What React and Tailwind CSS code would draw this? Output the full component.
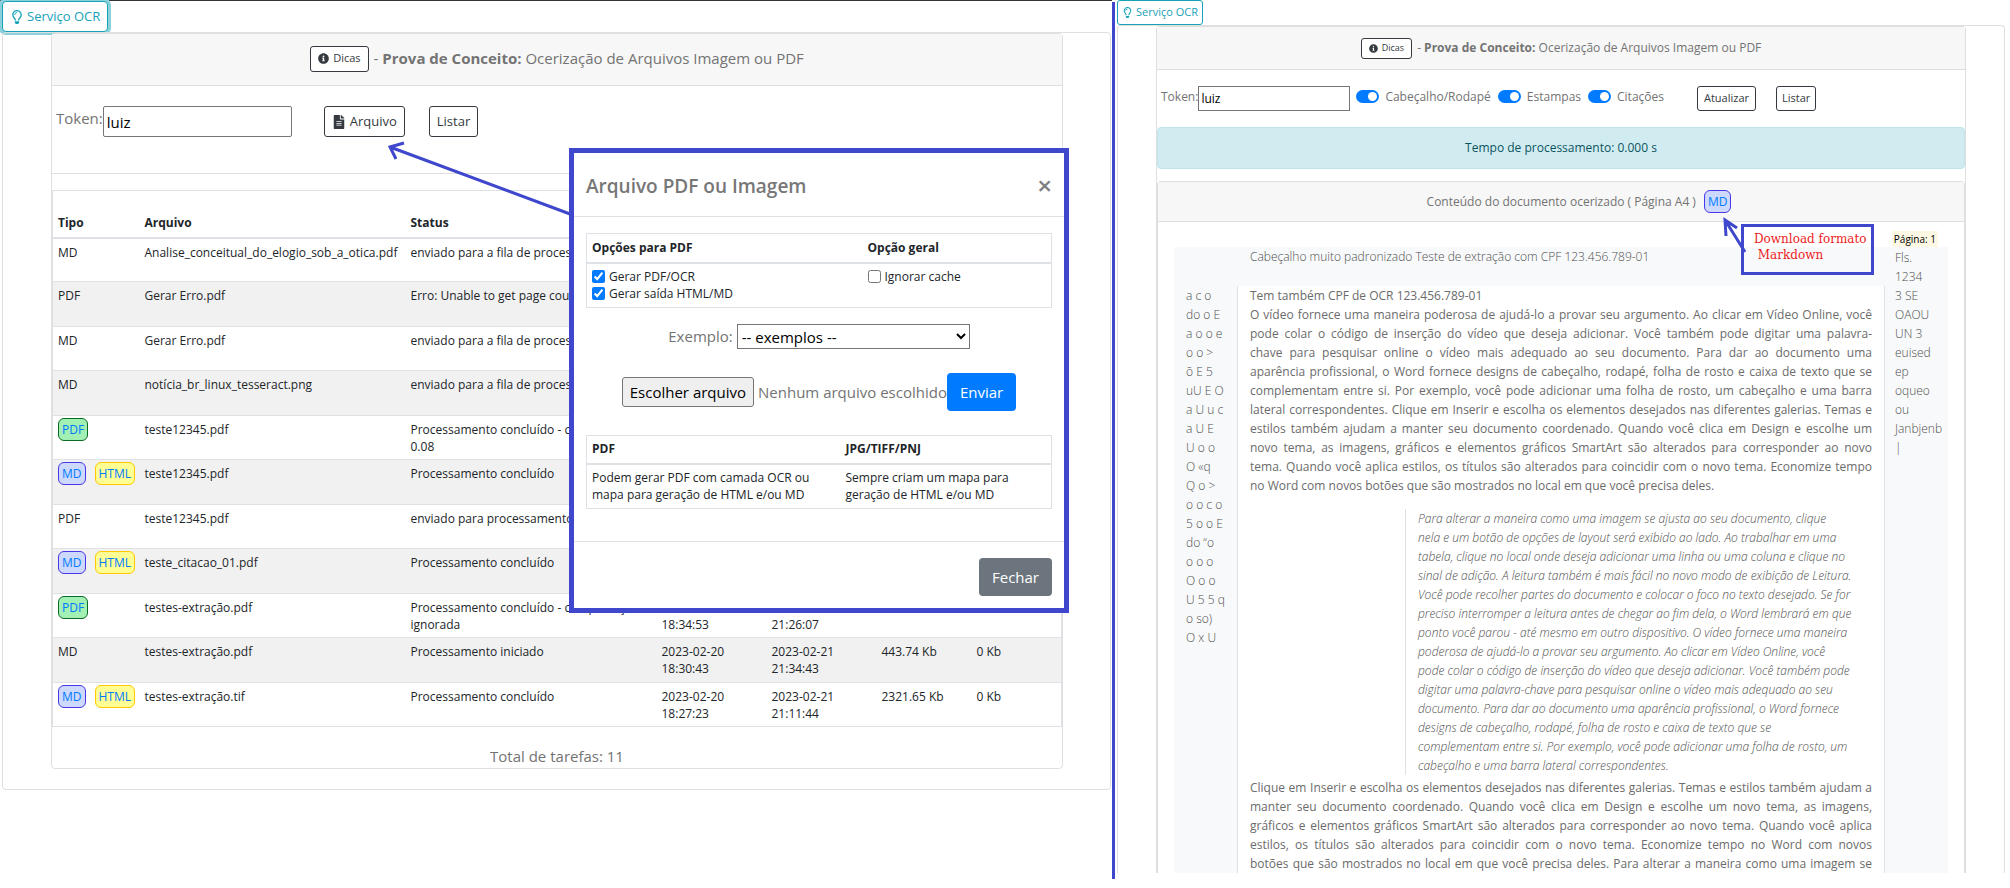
import { useState } from "react";
import { FaRegLightbulb, FaInfoCircle, FaFileAlt } from "react-icons/fa";

const tarefas = [
  { tipos: ["MD"], arquivo: "Analise_conceitual_do_elogio_sob_a_otica.pdf", status: "enviado para a fila de processamento" },
  { tipos: ["PDF"], arquivo: "Gerar Erro.pdf", status: "Erro: Unable to get page count." },
  { tipos: ["MD"], arquivo: "Gerar Erro.pdf", status: "enviado para a fila de processamento" },
  { tipos: ["MD"], arquivo: "notícia_br_linux_tesseract.png", status: "enviado para a fila de processamento" },
  { tipos: ["PDF"], pronto: true, arquivo: "teste12345.pdf", status: "Processamento concluído - compactação 0.08" },
  { tipos: ["MD", "HTML"], pronto: true, arquivo: "teste12345.pdf", status: "Processamento concluído" },
  { tipos: ["PDF"], arquivo: "teste12345.pdf", status: "enviado para processamento" },
  { tipos: ["MD", "HTML"], pronto: true, arquivo: "teste_citacao_01.pdf", status: "Processamento concluído" },
  { tipos: ["PDF"], pronto: true, arquivo: "testes-extração.pdf", status: "Processamento concluído - compactação ignorada", inicio: "2023-02-20 18:34:53", fim: "2023-02-21 21:26:07" },
  { tipos: ["MD"], arquivo: "testes-extração.pdf", status: "Processamento iniciado", inicio: "2023-02-20 18:30:43", fim: "2023-02-21 21:34:43", entrada: "443.74 Kb", saida: "0 Kb" },
  { tipos: ["MD", "HTML"], pronto: true, arquivo: "testes-extração.tif", status: "Processamento concluído", inicio: "2023-02-20 18:27:23", fim: "2023-02-21 21:11:44", entrada: "2321.65 Kb", saida: "0 Kb" },
];

const coresTipo = {
  PDF: "border-[#0b6b24] bg-[#a3f0b5]",
  MD: "border-[#4a36e8] bg-[#ccd9fc]",
  HTML: "border-[#ffc800] bg-[#ffff94]",
};

const estampaEsquerda = [
  "a c o", "do o E", "a o o e", "o o >", "õ E 5", "uU E O", "a U u c", "a U E", "U o o", "O «q",
  "Q o >", "o o c o", "5 o o E", "do “o", "o o o", "O o o", "U 5 5 q", "o so)", "O x U",
];

const estampaDireita = ["Fls.", "1234", "3 SE", "OAOU", "UN 3", "euised", "ep", "oqueo", "ou", "Janbjenb", "|"];

const paragrafo1 = [
  "O vídeo fornece uma maneira poderosa de ajudá-lo a provar seu argumento. Ao clicar em Vídeo Online, você",
  "pode colar o código de inserção do vídeo que deseja adicionar. Você também pode digitar uma palavra-",
  "chave para pesquisar online o vídeo mais adequado ao seu documento. Para dar ao documento uma",
  "aparência profissional, o Word fornece designs de cabeçalho, rodapé, folha de rosto e caixa de texto que se",
  "complementam entre si. Por exemplo, você pode adicionar uma folha de rosto, um cabeçalho e uma barra",
  "lateral correspondentes. Clique em Inserir e escolha os elementos desejados nas diferentes galerias. Temas e",
  "estilos também ajudam a manter seu documento coordenado. Quando você clica em Design e escolhe um",
  "novo tema, as imagens, gráficos e elementos gráficos SmartArt são alterados para corresponder ao novo",
  "tema. Quando você aplica estilos, os títulos são alterados para coincidir com o novo tema. Economize tempo",
];

const citacao = [
  "Para alterar a maneira como uma imagem se ajusta ao seu documento, clique",
  "nela e um botão de opções de layout será exibido ao lado. Ao trabalhar em uma",
  "tabela, clique no local onde deseja adicionar uma linha ou uma coluna e clique no",
  "sinal de adição. A leitura também é mais fácil no novo modo de exibição de Leitura.",
  "Você pode recolher partes do documento e colocar o foco no texto desejado. Se for",
  "preciso interromper a leitura antes de chegar ao fim dela, o Word lembrará em que",
  "ponto você parou - até mesmo em outro dispositivo. O vídeo fornece uma maneira",
  "poderosa de ajudá-lo a provar seu argumento. Ao clicar em Vídeo Online, você",
  "pode colar o código de inserção do vídeo que deseja adicionar. Você também pode",
  "digitar uma palavra-chave para pesquisar online o vídeo mais adequado ao seu",
  "documento. Para dar ao documento uma aparência profissional, o Word fornece",
  "designs de cabeçalho, rodapé, folha de rosto e caixa de texto que se",
  "complementam entre si. Por exemplo, você pode adicionar uma folha de rosto, um",
  "cabeçalho e uma barra lateral correspondentes.",
];

const paragrafo2 = [
  "Clique em Inserir e escolha os elementos desejados nas diferentes galerias. Temas e estilos também ajudam a",
  "manter seu documento coordenado. Quando você clica em Design e escolhe um novo tema, as imagens,",
  "gráficos e elementos gráficos SmartArt são alterados para corresponder ao novo tema. Quando você aplica",
  "estilos, os títulos são alterados para coincidir com o novo tema. Economize tempo no Word com novos",
  "botões que são mostrados no local em que você precisa deles. Para alterar a maneira como uma imagem se",
];

const Etiqueta = ({ tipo }) => (
  <a href={`#${tipo}`} className={`rounded-md border px-[3px] py-px leading-[19px] text-[#007bff] ${coresTipo[tipo]}`}>
    {tipo}
  </a>
);

const Linhas = ({ linhas }) => linhas.map((linha, i) => (
  <span key={i} className="block whitespace-nowrap">{linha}</span>
));

const Interruptor = ({ id, texto }) => {
  const [ligado, setLigado] = useState(true);
  return (
    <div className="mr-[7px] flex items-center gap-[6px]">
      <input
        id={id}
        type="checkbox"
        role="switch"
        checked={ligado}
        onChange={() => setLigado(!ligado)}
        className="relative h-[13px] w-[23px] appearance-none rounded-full bg-gray-400 before:absolute before:top-[2px] before:left-[2px] before:size-[9px] before:rounded-full before:bg-white checked:bg-[#007bff] checked:before:left-[12px]"
      />
      <label htmlFor={id}>{texto}</label>
    </div>
  );
};

const ModalArquivo = () => (
  <div role="dialog" aria-labelledby="titulo-modal" className="absolute top-[147px] left-[569px] w-[500px] border-[5px] border-[#3f48cc] bg-white">
    <div className="flex h-16 items-center justify-between border-b border-[#dee2e6] pr-2 pl-3">
      <h5 id="titulo-modal" className="pt-1 text-[19px] font-semibold text-[#777]">Arquivo PDF ou Imagem</h5>
      <button aria-label="Fechar janela" className="px-1 text-[26px] leading-6 font-semibold text-[#7f7f7f]">×</button>
    </div>
    <div className="px-3 pt-4 pb-8">
      <table className="w-full table-fixed border border-[#dee2e6] text-left text-xs text-[#212529]">
        <thead>
          <tr className="h-[29px] border-b-2 border-[#dee2e6]">
            <th className="w-[276px] px-[5px]">Opções para PDF</th>
            <th className="px-[5px]">Opção geral</th>
          </tr>
        </thead>
        <tbody>
          <tr className="h-[45px] align-top leading-[17px]">
            <td className="px-[5px] pt-1">
              <div className="flex items-center gap-1">
                <input id="gerar-pdf" type="checkbox" defaultChecked className="size-[13px] accent-[#007bff]" />
                <label htmlFor="gerar-pdf">Gerar PDF/OCR</label>
              </div>
              <div className="flex items-center gap-1">
                <input id="gerar-html" type="checkbox" defaultChecked className="size-[13px] accent-[#007bff]" />
                <label htmlFor="gerar-html">Gerar saída HTML/MD</label>
              </div>
            </td>
            <td className="px-[5px] pt-1">
              <div className="flex items-center gap-1">
                <input id="ignorar" type="checkbox" className="size-[13px]" />
                <label htmlFor="ignorar">Ignorar cache</label>
              </div>
            </td>
          </tr>
        </tbody>
      </table>
      <div className="mt-4 flex items-center justify-center gap-1">
        <label htmlFor="exemplo">Exemplo:</label>
        <select id="exemplo" className="h-[25px] w-[233px] border border-[#767676] bg-white text-black">
          <option>-- exemplos --</option>
        </select>
      </div>
      <div className="mt-6 flex items-center justify-center">
        <label htmlFor="arquivo" className="mr-1 rounded-[3px] border border-[#767676] bg-[#efefef] px-[7px] leading-7 text-black">
          Escolher arquivo
        </label>
        <input id="arquivo" type="file" className="sr-only" />
        <span>Nenhum arquivo escolhido</span>
        <button className="h-[38px] rounded bg-[#007bff] px-[13px] text-white">Enviar</button>
      </div>
      <table className="mt-6 w-full table-fixed border border-[#dee2e6] text-left text-xs text-[#212529]">
        <thead>
          <tr className="h-[28px] border-b-2 border-[#dee2e6]">
            <th className="w-[254px] px-[5px]">PDF</th>
            <th className="px-[5px]">JPG/TIFF/PNJ</th>
          </tr>
        </thead>
        <tbody>
          <tr className="h-[45px] leading-[17px]">
            <td className="px-[5px]">Podem gerar PDF com camada OCR ou<br />mapa para geração de HTML e/ou MD</td>
            <td className="px-[5px]">Sempre criam um mapa para<br />geração de HTML e/ou MD</td>
          </tr>
        </tbody>
      </table>
    </div>
    <div className="flex justify-end border-t border-[#dee2e6] px-3 pt-4 pb-3">
      <button className="h-[38px] rounded bg-[#6c757d] px-[13px] text-white">Fechar</button>
    </div>
  </div>
);

const ListaTarefas = () => (
  <section className="relative min-w-0 border-t border-[#333] pl-[2px] text-[15px]">
    <button className="flex h-[31px] items-center gap-[3px] rounded border border-[#17a2b8] bg-white px-[7px] text-[13px] text-[#17a2b8] shadow-[0_0_0_3px_#8bd0db]">
      <FaRegLightbulb className="text-sm" /> Serviço OCR
    </button>
    <div className="mr-[1px] rounded border border-[#dfdfdf] pr-[47px] pb-5 pl-12">
      <div className="rounded border border-[#dfdfdf]">
        <div className="flex h-[52px] items-center justify-center gap-[5px] border-b border-[#dfdfdf] bg-[#f7f7f7] pb-[2px]">
          <button className="flex h-[26px] items-center gap-1 rounded-[3px] border border-[#343a40] bg-white px-[7px] text-[11px] text-[#343a40]">
            <FaInfoCircle className="text-[11px]" /> Dicas
          </button>
          <p>- <b>Prova de Conceito:</b> Ocerização de Arquivos Imagem ou PDF</p>
        </div>
        <div className="flex h-[88px] items-start border-b border-[#dfdfdf] pt-5 pl-1">
          <label htmlFor="token" className="leading-6">Token:</label>
          <input id="token" defaultValue="luiz" className="h-[31px] w-[189px] rounded-[2px] border border-[#767676] px-[3px] text-black" />
          <button className="ml-8 flex h-[31px] items-center gap-1 rounded-[3px] border border-[#343a40] px-[7px] text-[13px] text-[#343a40]">
            <FaFileAlt className="text-sm" /> Arquivo
          </button>
          <button className="ml-6 h-[31px] rounded-[3px] border border-[#343a40] px-[7px] text-[13px] text-[#343a40]">Listar</button>
        </div>
        <table className="mt-4 w-full table-fixed border border-[#dee2e6] text-left text-xs leading-[17px] text-[#212529]">
          <thead>
            <tr className="h-[47px] border-b-2 border-[#dee2e6] align-bottom">
              <th className="w-[87px] px-[5px] pb-[6px]">Tipo</th>
              <th className="w-[266px] px-[5px] pb-[6px]">Arquivo</th>
              <th className="w-[251px] px-[5px] pb-[6px]">Status</th>
              <th className="w-[110px] px-[5px] pb-[6px]">Início</th>
              <th className="w-[110px] px-[5px] pb-[6px]">Fim</th>
              <th className="w-[95px] px-[5px] pb-[6px]">Entrada</th>
              <th className="px-[5px] pb-[6px]">Saída</th>
            </tr>
          </thead>
          <tbody>
            {tarefas.map((t, i) => (
              <tr key={i} className="h-11 border-b border-[#dee2e6] align-top even:h-[45px] even:bg-[#f1f1f1]">
                <td className={`px-[5px] whitespace-nowrap ${t.pronto ? "pt-[2px]" : "pt-[5px]"}`}>
                  {t.pronto ? (
                    <span className="flex gap-[9px]">{t.tipos.map((tipo) => <Etiqueta key={tipo} tipo={tipo} />)}</span>
                  ) : (
                    t.tipos[0]
                  )}
                </td>
                <td className="px-[5px] pt-[5px] whitespace-nowrap">{t.arquivo}</td>
                <td className="px-[5px] pt-[5px]">{t.status}</td>
                <td className="pt-[5px] pr-8 pl-[5px]">{t.inicio}</td>
                <td className="pt-[5px] pr-8 pl-[5px]">{t.fim}</td>
                <td className="px-[5px] pt-[5px] whitespace-nowrap">{t.entrada}</td>
                <td className="px-[5px] pt-[5px] whitespace-nowrap">{t.saida}</td>
              </tr>
            ))}
          </tbody>
        </table>
        <p className="pt-[17px] text-center leading-6">Total de tarefas: 11</p>
      </div>
    </div>

    <svg className="absolute top-[138px] left-[384px]" width="188" height="82" fill="none" stroke="#3f48cc" strokeWidth="3">
      <path d="M186 75 L6 8 M20 4 L6 8 L12 20" />
    </svg>
    <ModalArquivo />
  </section>
);

const Documento = () => (
  <section className="min-w-0 pr-[5px] pb-[6px] pl-[2px] text-xs">
    <button className="flex h-[25px] items-center gap-[3px] rounded-[3px] border border-[#17a2b8] px-1 text-[11px] text-[#17a2b8]">
      <FaRegLightbulb className="text-[11px]" /> Serviço OCR
    </button>
    <div className="rounded-t border border-b-0 border-[#dfdfdf] px-[38px]">
      <div className="rounded-t border border-b-0 border-[#dfdfdf]">
        <div className="flex h-[43px] items-center justify-center gap-[5px] border-b border-[#dfdfdf] bg-[#f7f7f7]">
          <button className="flex h-[21px] items-center gap-1 rounded-[3px] border border-[#343a40] bg-white px-[7px] text-[9px] text-[#343a40]">
            <FaInfoCircle /> Dicas
          </button>
          <p>- <b>Prova de Conceito:</b> Ocerização de Arquivos Imagem ou PDF</p>
        </div>
        <div className="flex h-[57px] items-start pt-4 pl-1">
          <label htmlFor="token-doc" className="leading-[21px]">Token:</label>
          <input id="token-doc" defaultValue="luiz" className="mr-[6px] h-[25px] w-[152px] border border-[#767676] px-[2px] text-black" />
          <div className="flex h-[21px] items-center">
            <Interruptor id="cabecalho" texto="Cabeçalho/Rodapé" />
            <Interruptor id="estampas" texto="Estampas" />
            <Interruptor id="citacoes" texto="Citações" />
          </div>
          <button className="ml-[26px] h-[25px] rounded-[3px] border border-[#343a40] px-[6px] text-[11px] text-[#343a40]">Atualizar</button>
          <button className="ml-5 h-[25px] rounded-[3px] border border-[#343a40] px-[5px] text-[11px] text-[#343a40]">Listar</button>
        </div>
        <div className="rounded border border-[#bee5eb] bg-[#d1ecf1] text-center leading-10 text-[#0c5460]">
          Tempo de processamento: 0.000 s
        </div>
        <div className="relative mt-3 rounded-t border border-b-0 border-[#dfdfdf]">
          <div className="flex h-10 items-center justify-center gap-2 border-b border-[#dfdfdf] bg-[#f7f7f7] pl-9">
            <span>Conteúdo do documento ocerizado ( Página A4 )</span>
            <Etiqueta tipo="MD" />
          </div>
          <div className="px-4 pt-[9px] leading-[19px]">
            <div className="flex justify-end">
              <span className="mr-[10px] bg-[#fcf8e3] px-[2px] text-[10px] leading-4 text-black">Página: 1</span>
            </div>
            <div className="grid grid-cols-[63px_1fr_63px] grid-rows-[39px_1fr] bg-[#f8f9fa] font-light text-[#4f4f4f]">
              <p className="col-start-2 row-start-1 pl-[13px]">
                Cabeçalho muito padronizado Teste de extração com CPF 123.456.789-01
              </p>
              <div className="col-start-1 row-start-2 pl-3">
                <Linhas linhas={estampaEsquerda} />
              </div>
              <div className="col-start-2 row-start-2 border-x border-[#dee2e6] bg-white px-3 font-normal text-[#6b6b6b]">
                <p>Tem também CPF de OCR 123.456.789-01</p>
                <p className="[text-align-last:justify]"><Linhas linhas={paragrafo1} /></p>
                <p>no Word com novos botões que são mostrados no local em que você precisa deles.</p>
                <blockquote className="mt-[14px] mb-[3px] ml-[155px] border-l border-[#dee2e6] pl-3 font-light text-[#4f4f4f] italic">
                  <Linhas linhas={citacao} />
                </blockquote>
                <p className="[text-align-last:justify]"><Linhas linhas={paragrafo2} /></p>
              </div>
              <div className="col-start-3 row-span-2 row-start-1 pt-px pl-[10px]">
                <Linhas linhas={estampaDireita} />
              </div>
            </div>
          </div>

          <svg className="absolute top-[34px] right-[215px]" width="28" height="40" fill="none" stroke="#3f48cc" strokeWidth="3">
            <path d="M24 36 L4 4 M5 20 L4 4 L16 12" />
          </svg>
          <p className="absolute top-[42px] right-[90px] h-[51px] w-[133px] border-[3px] border-[#3f48cc] pt-1 pl-[10px] font-['DejaVu_Serif',serif] text-xs leading-4 whitespace-pre text-[#ed1c24]">
            {"Download formato\n Markdown"}
          </p>
        </div>
      </div>
    </div>
  </section>
);

const App = () => (
  <main className="grid grid-cols-[1112fr_3px_895fr] bg-white font-['Open_Sans','Noto_Sans',sans-serif] text-[#737373]">
    <ListaTarefas />
    <div className="mt-[2px] bg-[#3f48cc]" />
    <Documento />
  </main>
);

export default App;
